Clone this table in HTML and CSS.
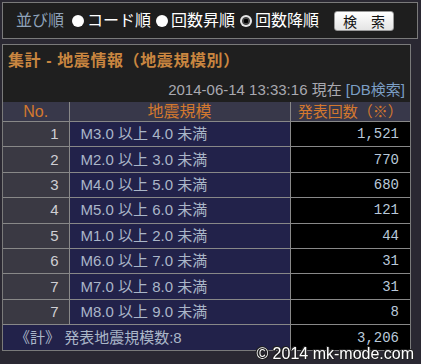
FILE: index.html
```html
<!DOCTYPE html>
<html lang="ja">
<head>
<meta charset="utf-8">
<title>集計 - 地震情報（地震規模別）</title>
<link rel="stylesheet" href="styles.css">
</head>
<body>
<div class="sortbar">
  <span class="sort-label">並び順</span>
  <label class="opt"><span class="radio"></span>コード順</label>
  <label class="opt"><span class="radio"></span>回数昇順</label>
  <label class="opt"><span class="radio checked"></span>回数降順</label>
  <button class="btn">検　索</button>
</div>
<div class="panel">
  <div class="panel-head">
    <div class="title">集計 - 地震情報（地震規模別）</div>
    <div class="stamp">2014-06-14 13:33:16 現在 <a class="db">[DB検索]</a></div>
  </div>
  <table class="grid">
    <colgroup><col class="c1"><col class="c2"><col class="c3"></colgroup>
    <thead>
      <tr><th>No.</th><th>地震規模</th><th class="h3">発表回数（※）</th></tr>
    </thead>
    <tbody>
      <tr><td class="no">1</td><td class="mag">M3.0 以上 4.0 未満</td><td class="cnt">1,521</td></tr>
      <tr><td class="no">2</td><td class="mag">M2.0 以上 3.0 未満</td><td class="cnt">770</td></tr>
      <tr><td class="no">3</td><td class="mag">M4.0 以上 5.0 未満</td><td class="cnt">680</td></tr>
      <tr><td class="no">4</td><td class="mag">M5.0 以上 6.0 未満</td><td class="cnt">121</td></tr>
      <tr><td class="no">5</td><td class="mag">M1.0 以上 2.0 未満</td><td class="cnt">44</td></tr>
      <tr><td class="no">6</td><td class="mag">M6.0 以上 7.0 未満</td><td class="cnt">31</td></tr>
      <tr><td class="no">7</td><td class="mag">M7.0 以上 8.0 未満</td><td class="cnt">31</td></tr>
      <tr><td class="no">7</td><td class="mag">M8.0 以上 9.0 未満</td><td class="cnt">8</td></tr>
      <tr class="total"><td class="sum" colspan="2">《計》 発表地震規模数:8</td><td class="cnt">3,206</td></tr>
    </tbody>
  </table>
</div>
<div class="copy">© 2014 mk-mode.com</div>
</body>
</html>
```
FILE: styles.css
```css
html, body {
  margin: 0;
  background: #2a2832;
}
body {
  padding: 2px;
  font-family: "Liberation Sans", "Noto Sans CJK JP", sans-serif;
  color: #ccc;
}
.sortbar {
  box-sizing: border-box;
  width: 416px;
  height: 37px;
  border: 1px solid #7a7a7a;
  background: #1e1e1e;
  display: flex;
  align-items: center;
  padding-left: 13px;
  font-size: 16px;
  line-height: 20px;
}
.sort-label {
  color: #8fa3ba;
  margin-right: 8px;
}
.opt {
  display: flex;
  align-items: center;
  color: #fff;
  margin-right: 5px;
}
.radio {
  width: 12px;
  height: 12px;
  border-radius: 50%;
  background: #fff;
  margin-right: 3px;
}
.radio.checked {
  background: radial-gradient(circle, #000 0 2px, #444 2.5px 3.5px, #e6e6e6 4.5px);
}
.btn {
  margin-left: 10px;
  width: 60px;
  height: 20px;
  padding: 0;
  border: 1px solid #9a9a9a;
  border-radius: 3px;
  background: linear-gradient(#ffffff, #e4e4e4);
  font-family: "Noto Sans CJK JP", sans-serif;
  font-size: 14px;
  line-height: 18px;
  color: #111;
}
.panel {
  box-sizing: border-box;
  width: 409px;
  margin-top: 5px;
  border: 1px solid #7a7a7a;
  background: #1f1f1f;
}
.panel-head {
  height: 57px;
  padding: 6px 5px 0 5px;
  box-sizing: border-box;
}
.title {
  color: #c98640;
  font-weight: bold;
  font-size: 16px;
  line-height: 20px;
  letter-spacing: 0.6px;
}
.stamp {
  text-align: right;
  color: #a9a9b0;
  font-size: 15px;
  line-height: 18px;
  margin-top: 10px;
}
.db {
  color: #7b9ec4;
}
.grid {
  width: 100%;
  border-collapse: collapse;
  table-layout: fixed;
  border-style: hidden;
}
.c1 { width: 66px; }
.c2 { width: 221px; }
.c3 { width: 120px; }
.grid th, .grid td {
  border: 1px solid #888;
  padding: 0;
}
.grid th {
  height: 19px;
  background: #38384a;
  color: #d4782e;
  font-weight: normal;
  font-size: 16px;
  line-height: 19px;
}
.grid th.h3 {
  font-size: 15px;
}
.grid td {
  height: 24.4px;
  font-size: 15px;
  line-height: 18px;
}
.no {
  background: #3a3943;
  color: #cfcfd4;
  text-align: right;
  padding-right: 10px !important;
}
.mag {
  background: #22224a;
  color: #aab6c8;
  padding-left: 11px !important;
}
.cnt {
  background: #000;
  color: #b9c9da;
  text-align: right;
  padding-right: 11px !important;
  font-family: "Liberation Mono", monospace;
  font-size: 14px !important;
}
.sum {
  background: #22224a;
  color: #aab6c8;
  padding-left: 12px !important;
}
.total td {
  height: 25px;
}
.copy {
  position: fixed;
  right: 7px;
  bottom: 1px;
  font-family: "Liberation Sans", sans-serif;
  font-size: 16px;
  line-height: 18px;
  color: #fff;
  text-shadow: -1px 0 #222, 1px 0 #222, 0 -1px #222, 0 1px #222, 1px 1px #222, -1px -1px #222;
}
```
